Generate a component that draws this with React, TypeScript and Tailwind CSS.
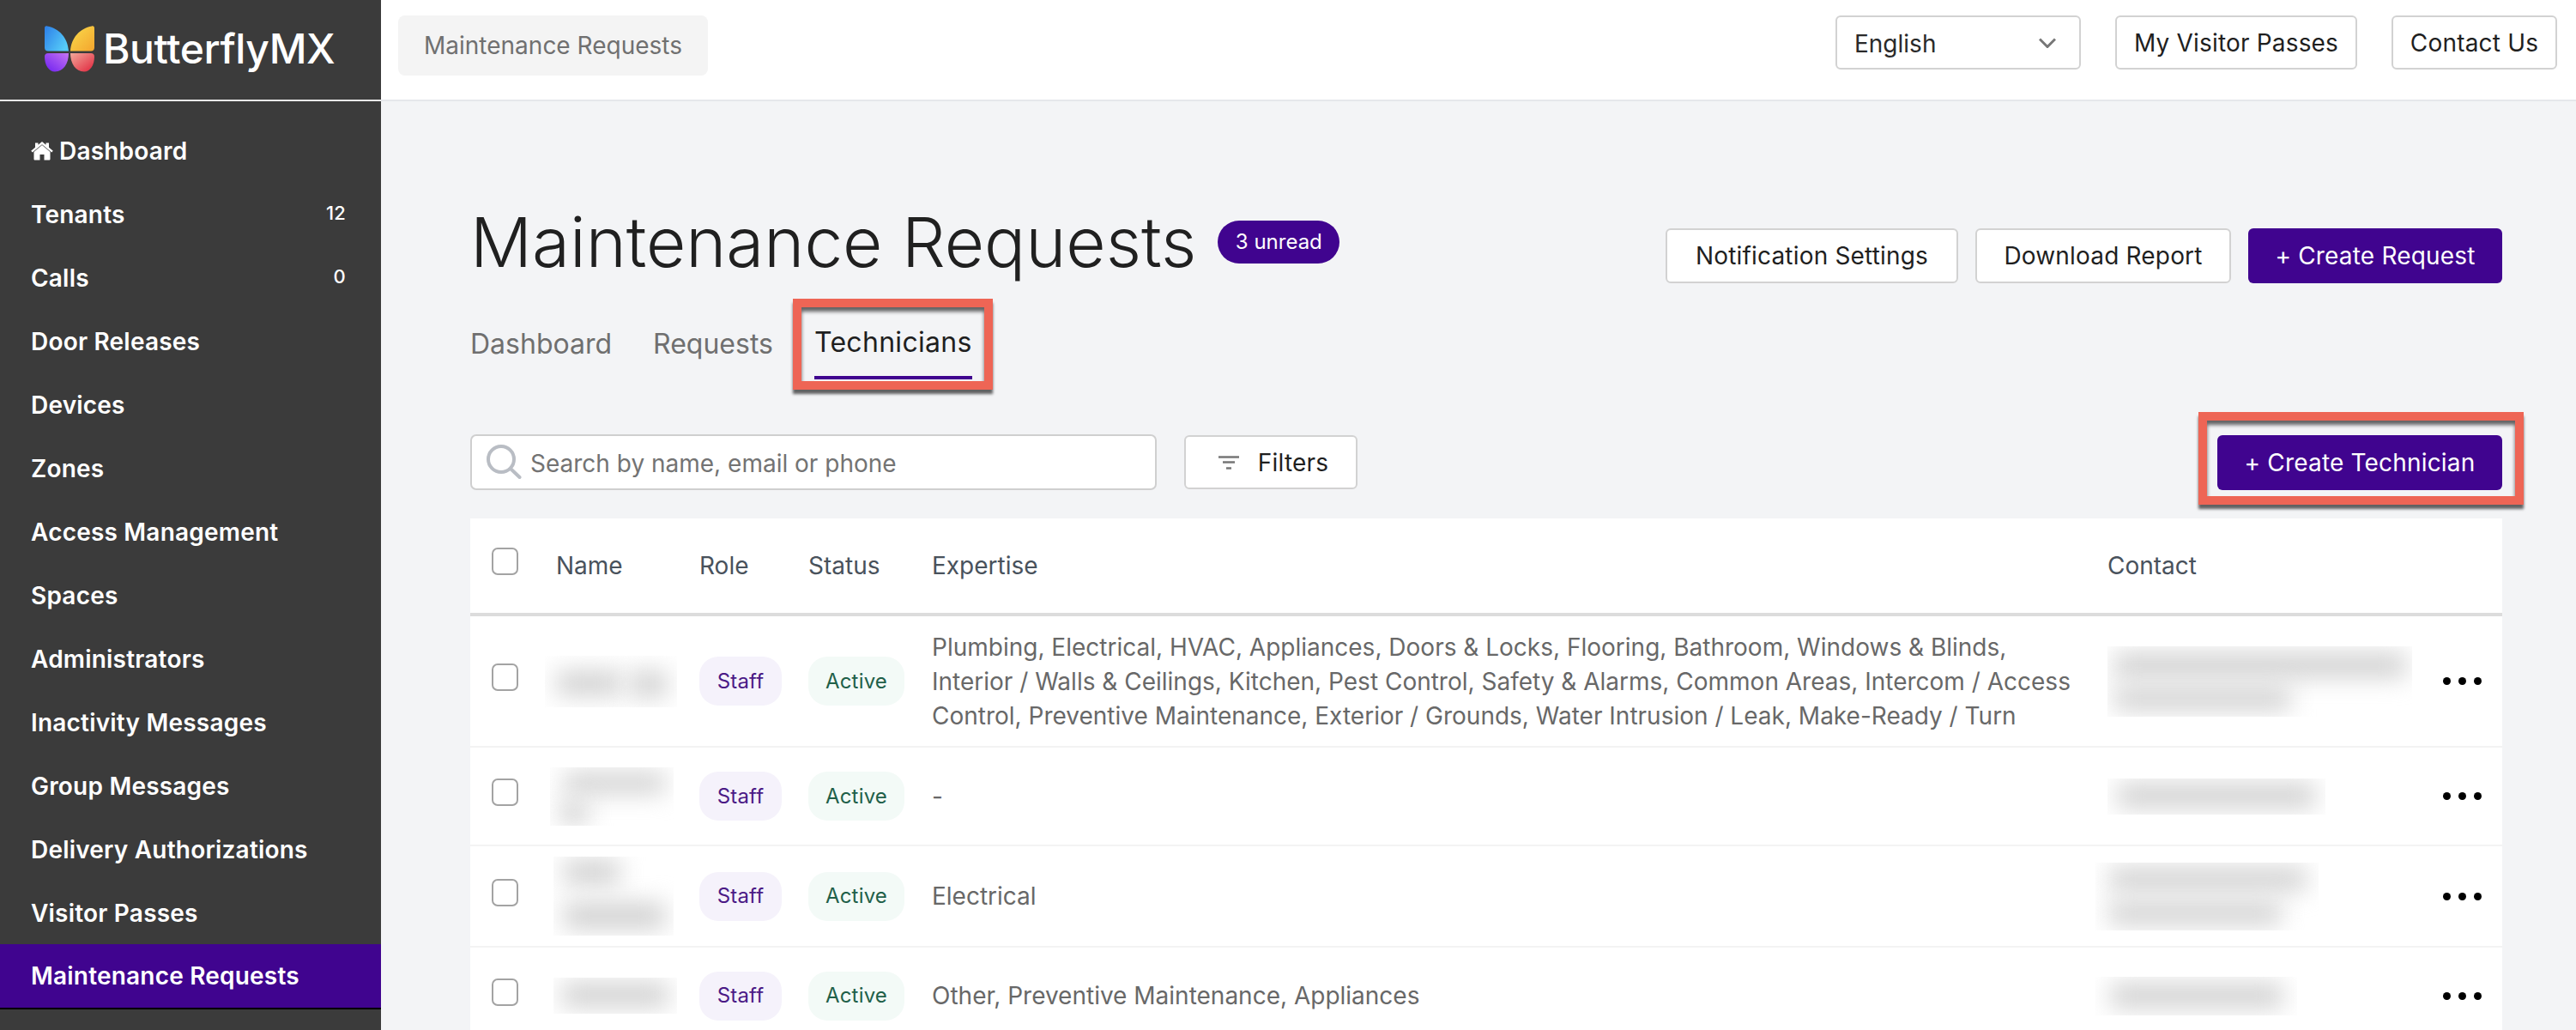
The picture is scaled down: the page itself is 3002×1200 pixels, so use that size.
import * as React from 'react'

const navItems = [
  'Tenants', 'Calls', 'Door Releases', 'Devices', 'Zones', 'Access Management', 'Spaces', 'Administrators',
  'Inactivity Messages', 'Group Messages', 'Delivery Authorizations', 'Visitor Passes',
]

const counts: Record<string, string> = { Tenants: '12', Calls: '0' }

function Logo() {
  return (
    <svg width="60" height="54" viewBox="0 0 60 54" className="shrink-0">
      <defs>
        <linearGradient id="wingA" x1="0" y1="0" x2="1" y2="0.6">
          <stop offset="0" stopColor="#2c7ee8" />
          <stop offset="1" stopColor="#56ccf8" />
        </linearGradient>
        <linearGradient id="wingB" x1="0" y1="0" x2="1" y2="1">
          <stop offset="0" stopColor="#f9dc4c" />
          <stop offset="1" stopColor="#f4a52e" />
        </linearGradient>
        <linearGradient id="wingC" x1="1" y1="0" x2="0" y2="1">
          <stop offset="0" stopColor="#c574f2" />
          <stop offset="1" stopColor="#6d1ff0" />
        </linearGradient>
        <linearGradient id="wingD" x1="0" y1="0" x2="1" y2="1">
          <stop offset="0" stopColor="#f2a89a" />
          <stop offset="1" stopColor="#e0243c" />
        </linearGradient>
      </defs>
      <path d="M1 3C1 1 2 0 4 .5 18 3 28 14 29 29.500H5c-2.500 0-4-1.500-4-4z" fill="url(#wingA)" />
      <path d="M59 3c0-2-1-3-3-2.500C42 3 32 14 31 29.500h24c2.500 0 4-1.500 4-4z" fill="url(#wingB)" />
      <path d="M1 36c0-2.500 1.500-4 4-4h24c0 12-6 21.500-16 21.500C6 53.500 1 46 1 36z" fill="url(#wingC)" />
      <path d="M59 36c0-2.500-1.500-4-4-4H31c0 12 6 21.500 16 21.500 7 0 12-7.500 12-17.500z" fill="url(#wingD)" />
    </svg>
  )
}

function Sidebar() {
  return (
    <aside className="w-[444px] shrink-0 bg-[#3b3b3b] text-white">
      <div className="h-[118px] flex items-center gap-[9px] pl-[51px] pb-[3px] border-b-2 border-[#e8e8e8]">
        <Logo />
        <span className="text-[48px] font-medium tracking-[-0.4px] leading-none">ButterflyMX</span>
      </div>
      <nav className="pt-[21px] tracking-[0.2px]">
        <div className="h-[74px] flex items-center pl-[36px] text-[28px] font-semibold">
          <svg width="26" height="22" viewBox="0 0 26 22" fill="white" className="mr-[7px]">
            <path d="M13 4 3.500 12v8.200c0 .7.500 1.300 1.200 1.300h5.800v-6.500h5v6.500h5.800c.7 0 1.200-.6 1.200-1.300V12z" />
            <path d="M13 0 8.500 3.800V1.500H5v5.200L.2 10.800l1.600 1.800L13 3.200l11.200 9.400 1.600-1.800-4.800-4V1.500h-3.500v2.300z" />
          </svg>
          Dashboard
        </div>
        {navItems.map((item) => (
          <div key={item} className="h-[74px] flex items-center justify-between pl-[36px] pr-[41px] text-[28px] font-semibold">
            <span>{item}</span>
            {counts[item] && <span className="text-[22px] font-medium -mt-[4px]">{counts[item]}</span>}
          </div>
        ))}
        <div className="h-[76px] -mt-[1px] flex items-center pl-[36px] bg-[#40048f] border-b-2 border-black text-[28px] font-semibold">
          Maintenance Requests
        </div>
      </nav>
    </aside>
  )
}

function OutlineButton({ children, className }: { children: React.ReactNode; className?: string }) {
  return (
    <button className={`border-2 border-[#d2d2d2] bg-white rounded-[6px] text-[28px] tracking-[0.18px] text-[#1f1f1f] flex items-center justify-center ${className ?? ''}`}>
      {children}
    </button>
  )
}

// the screenshot's red callout, sits on top of the thing it points at
function Callout({ className }: { className: string }) {
  return (
    <div className={`absolute border-[10px] border-[#ee6555] shadow-[0_5px_3px_rgba(0,0,0,0.6),inset_0_5px_4px_rgba(0,0,0,0.6)] pointer-events-none ${className}`} />
  )
}

function Blur({ className, bars }: { className: string; bars: string[] }) {
  return (
    <div className={`relative overflow-hidden ${className}`}>
      {bars.map((bar) => (
        <div key={bar} className={`absolute bg-[#d0d0d0] blur-[14px] ${bar}`} />
      ))}
    </div>
  )
}

function Checkbox({ className }: { className?: string }) {
  return <div className={`w-[31px] h-[32px] border-2 border-[#a3a3a3] rounded-[7px] bg-white shrink-0 ${className ?? ''}`} />
}

function Dots() {
  return (
    <div className="flex gap-[9px] w-[46px] -ml-[1px]">
      <span className="w-[9px] h-[9px] rounded-full bg-black" />
      <span className="w-[9px] h-[9px] rounded-full bg-black" />
      <span className="w-[9px] h-[9px] rounded-full bg-black" />
    </div>
  )
}

const rows = [
  {
    h: 'h-[153px]',
    expertise: 'Plumbing, Electrical, HVAC, Appliances, Doors & Locks, Flooring, Bathroom, Windows & Blinds, Interior / Walls & Ceilings, Kitchen, Pest Control, Safety & Alarms, Common Areas, Intercom / Access Control, Preventive Maintenance, Exterior / Grounds, Water Intrusion / Leak, Make-Ready / Turn',
    name: <Blur className="w-[154px] h-[60px] -ml-[13px]" bars={['left-[14px] top-[18px] w-[75px] h-[28px]', 'left-[100px] top-[18px] w-[42px] h-[30px]']} />,
    contact: <Blur className="w-[355px] h-[82px]" bars={['left-[8px] top-[8px] w-[340px] h-[28px]', 'left-[8px] top-[48px] w-[205px] h-[26px]']} />,
  },
  {
    h: 'h-[115px]',
    expertise: '-',
    name: <Blur className="w-[144px] h-[68px] -ml-[7px]" bars={['left-[16px] top-[6px] w-[118px] h-[24px]', 'left-[12px] top-[40px] w-[32px] h-[26px]']} />,
    contact: <Blur className="w-[254px] h-[42px]" bars={['left-[12px] top-[6px] w-[230px] h-[28px]']} />,
  },
  {
    h: 'h-[118px]',
    expertise: 'Electrical',
    name: <Blur className="w-[140px] h-[92px] -ml-[3px]" bars={['left-[12px] top-[4px] w-[65px] h-[28px]', 'left-[12px] top-[54px] w-[118px] h-[30px]']} />,
    contact: <Blur className="w-[260px] h-[79px] -ml-[14px]" bars={['left-[16px] top-[6px] w-[230px] h-[26px]', 'left-[16px] top-[46px] w-[200px] h-[26px]']} />,
  },
  {
    h: 'h-[114px]',
    expertise: 'Other, Preventive Maintenance, Appliances',
    name: <Blur className="w-[144px] h-[42px] -ml-[3px]" bars={['left-[10px] top-[6px] w-[124px] h-[28px]']} />,
    contact: <Blur className="w-[235px] h-[45px] -ml-[14px]" bars={['left-[18px] top-[8px] w-[200px] h-[28px]']} />,
  },
]

function Pill({ label, tone }: { label: string; tone: 'staff' | 'active' }) {
  const cls = tone === 'staff' ? 'bg-[#f5f2fb] text-[#4b1a86] w-[96px]' : 'bg-[#f3faf7] text-[#1f6049] w-[112px]'
  return <span className={`h-[57px] rounded-[22px] flex items-center justify-center text-[24px] tracking-[0.2px] ${cls}`}>{label}</span>
}

export default function App() {
  return (
    <div className="flex h-[1200px] overflow-hidden bg-[#f3f4f6] font-['Inter',sans-serif]">
      <Sidebar />
      <main className="flex-1 min-w-0">
        <header className="h-[118px] bg-white border-b-2 border-[#e5e7eb] flex items-start pt-[18px] pl-[20px] pr-[22px]">
          <div className="h-[70px] w-[361px] rounded-[8px] bg-[#f4f4f4] flex items-center justify-center text-[28px] text-[#707070]">
            Maintenance Requests
          </div>
          <div className="ml-auto flex items-center gap-[40px]">
            <div className="w-[286px] h-[63px] border-2 border-[#d2d2d2] rounded-[6px] bg-white flex items-center justify-between pl-[20px] pr-[27px] text-[28px] text-[#2a2a2a]">
              <span className="mt-[3px]">English</span>
              <svg width="20" height="12" viewBox="0 0 20 12" fill="none" stroke="#777777" strokeWidth="3">
                <path d="M1 1.500 10 10.500l9-9" />
              </svg>
            </div>
            <OutlineButton className="w-[282px] h-[63px]">My Visitor Passes</OutlineButton>
            <OutlineButton className="w-[193px] h-[63px]">Contact Us</OutlineButton>
          </div>
        </header>

        <div className="pl-[104px] pr-[86px]">
          <div className="flex items-start justify-between h-[230px]">
            <div className="pt-[120px]">
              <div className="flex items-center gap-[25px]">
                <h1 className="text-[80px] font-light leading-[88px] text-[#202020]">Maintenance Requests</h1>
                <span className="h-[50px] w-[142px] rounded-full bg-[#40048f] text-white text-[24px] flex items-center justify-center">3 unread</span>
              </div>
            </div>
            <div className="flex gap-[20px] pt-[148px]">
              <OutlineButton className="w-[341px] h-[64px]">Notification Settings</OutlineButton>
              <OutlineButton className="w-[298px] h-[64px]">Download Report</OutlineButton>
              <button className="w-[296px] h-[64px] rounded-[6px] bg-[#40048f] text-white text-[28px] tracking-[0.18px]">+ Create Request</button>
            </div>
          </div>

          <div className="flex gap-[48px] text-[32px] text-[#6f6f6f] h-[158px]">
            <span className="h-[94px] flex items-center pt-[12px]">Dashboard</span>
            <span className="h-[94px] flex items-center pt-[12px]">Requests</span>
            <div className="relative h-[94px] flex items-center pt-[12px] tracking-[0.3px] text-[#1f1f1f] border-b-4 border-[#40048f]">
              Technicians
              <Callout className="-left-[25px] -right-[24px] top-0 -bottom-[16px]" />
            </div>
          </div>

          <div className="flex items-center h-[65px]">
            <div className="w-[800px] h-[65px] border-2 border-[#cfcfcf] rounded-[7px] bg-white flex items-center pl-[17px] gap-[10px] text-[28px] text-[#737373]">
              <svg width="41" height="41" viewBox="0 0 41 41" fill="none" stroke="#b9bdc4" strokeWidth="4" strokeLinecap="round">
                <circle cx="17" cy="17" r="15" />
                <path d="m28.500 28.500 10 9.500" />
              </svg>
              <span className="pt-[2px]">Search by name, email or phone</span>
            </div>
            <OutlineButton className="ml-[32px] w-[202px] h-[63px] gap-[22px] pl-[6px]">
              <svg width="24" height="16" viewBox="0 0 24 16" stroke="#777777" strokeWidth="2.500">
                <path d="M0 1.500h24M5 7.500h14M9 14.500h6" />
              </svg>
              Filters
            </OutlineButton>
            <div className="relative ml-auto">
              <button className="block w-[332px] h-[64px] rounded-[6px] bg-[#40048f] text-white text-[28px] tracking-[0.18px]">+ Create Technician</button>
              <Callout className="-left-[22px] -right-[25px] -top-[27px] -bottom-[17px]" />
            </div>
          </div>

          <div className="mt-[33px] bg-white">
            <div className="h-[114px] flex items-center border-b-4 border-[#dcdcdc] text-[28px] text-[#49525c]">
              <div className="w-[100px] pl-[25px]"><Checkbox className="-mt-[10px]" /></div>
              <div className="w-[167px]">Name</div>
              <div className="w-[127px]">Role</div>
              <div className="w-[144px]">Status</div>
              <div className="w-[1370px]">Expertise</div>
              <div>Contact</div>
            </div>
            {rows.map((row, i) => (
              <div key={i} className={`${row.h} flex items-center border-b-2 border-[#f3f3f3]`}>
                <div className="w-[100px] pl-[25px]"><Checkbox className="-mt-[9px]" /></div>
                <div className="w-[167px]">{row.name}</div>
                <div className="w-[127px]"><Pill label="Staff" tone="staff" /></div>
                <div className="w-[144px]"><Pill label="Active" tone="active" /></div>
                <div className="w-[1370px] pr-[36px] text-[28px] leading-[40px] text-[#686868]">{row.expertise}</div>
                <div className="w-[392px]">{row.contact}</div>
                <Dots />
              </div>
            ))}
          </div>
        </div>
      </main>
    </div>
  )
}
